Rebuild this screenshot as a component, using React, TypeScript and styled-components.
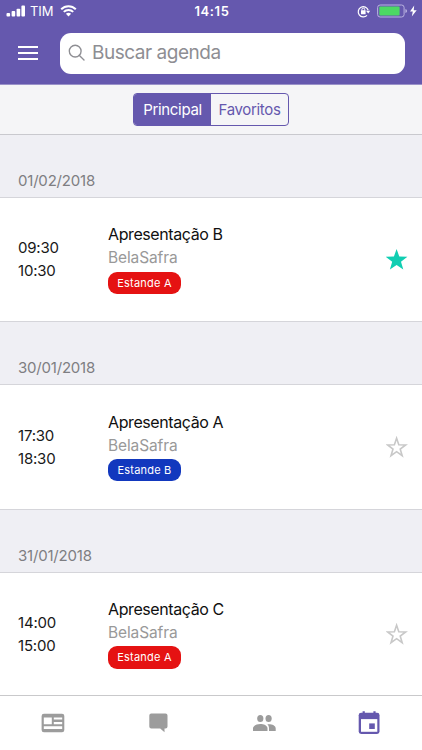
import React from "react";
import styled, { createGlobalStyle } from "styled-components";

const purple = "#6558ae";

const GlobalStyle = createGlobalStyle`
  * { box-sizing: border-box; }
  body { margin: 0; background: #fff; font-family: Inter, Roboto, "Liberation Sans", sans-serif; }
`;

const Screen = styled.div`
  width: 422px;
  height: 750px;
  display: flex;
  flex-direction: column;
  overflow: hidden;
  background: #efeff4;
`;

const Header = styled.header`
  height: 85px;
  flex: none;
  background: ${purple};
  border-bottom: 1px solid #9a92c9;
`;

const StatusBar = styled.div`
  height: 22px;
  display: grid;
  grid-template-columns: 1fr 40px 1fr;
  align-items: center;
  padding: 0 5px 0 6px;
  color: #fff;
`;

const StatusGroup = styled.div<{ $end?: boolean }>`
  display: flex;
  align-items: center;
  justify-content: ${(p) => (p.$end ? "flex-end" : "flex-start")};
`;

const Spacer = styled.span`
  width: 6px;
`;

const Carrier = styled.span`
  font-size: 13px;
  line-height: 22px;
  letter-spacing: -0.1px;
  margin: 0 7px 0 5px;
  width: 23px;
  white-space: nowrap;
`;

const Clock = styled.span`
  font-size: 13px;
  font-weight: 600;
  line-height: 22px;
  padding-left: 1px;
  text-align: center;
  white-space: nowrap;
  letter-spacing: 0.6px;
`;

const Toolbar = styled.div`
  display: flex;
  align-items: center;
  padding: 11px 17px 0 18px;
`;

const MenuButton = styled.button`
  border: 0;
  padding: 0;
  width: 20px;
  height: 14px;
  margin: -1px 22px 0 0;
  background: none;
  display: flex;
  flex-direction: column;
  justify-content: space-between;
`;

const MenuLine = styled.span`
  width: 20px;
  height: 2px;
  background: #fff;
`;

const SearchField = styled.div`
  flex: 1;
  height: 41px;
  border-radius: 11px;
  background: #fff;
  display: flex;
  align-items: center;
  padding: 0 8px 2px;
  color: #8e8e93;
`;

const SearchText = styled.span`
  margin-left: 6px;
  font-size: 19px;
  line-height: 24px;
  letter-spacing: -0.48px;
`;

const SegmentBar = styled.div`
  height: 50px;
  flex: none;
  display: flex;
  justify-content: center;
  align-items: flex-start;
  padding-top: 8px;
  background: #f5f5f7;
  border-bottom: 1px solid #c9c9ce;
`;

const Segment = styled.div`
  display: flex;
  width: 156px;
  height: 33px;
  border: 1px solid ${purple};
  border-radius: 4px;
  overflow: hidden;
`;

const SegmentButton = styled.button<{ $active?: boolean }>`
  width: 77px;
  border: 0;
  padding: 0;
  font: 400 15px/31px Inter, sans-serif;
  letter-spacing: -0.33px;
  background: ${(p) => (p.$active ? purple : "transparent")};
  color: ${(p) => (p.$active ? "#fff" : purple)};
`;

const Agenda = styled.main`
  height: 560px;
  flex: none;
`;

const DateHeading = styled.h2`
  margin: 0;
  height: 63.2px;
  padding: 35.2px 18px 0;
  border-bottom: 1px solid #d5d5da;
  font-size: 15px;
  font-weight: 400;
  line-height: 22px;
  letter-spacing: -0.2px;
  color: #7e7e82;
`;

const Entry = styled.article`
  height: 124.1px;
  display: grid;
  grid-template-columns: 90px 1fr 22px;
  padding: 0 14.5px 0 18px;
  background: #fff;
  border-bottom: 1px solid #d5d5da;
`;

const Times = styled.div`
  padding-top: 39.25px;
  font-size: 15px;
  line-height: 22.8px;
  letter-spacing: -0.2px;
  color: #181818;
`;

const Details = styled.div`
  display: flex;
  flex-direction: column;
  align-items: flex-start;
  padding-top: 24.2px;
`;

const Title = styled.h3`
  margin: 0;
  font-size: 16px;
  font-weight: 400;
  line-height: 24px;
  letter-spacing: -0.4px;
  color: #101010;
`;

const Company = styled.span`
  font-size: 15.5px;
  line-height: 24px;
  letter-spacing: -0.12px;
  color: #999;
`;

const Badge = styled.span<{ $color: string }>`
  margin-top: 1.2px;
  width: 73px;
  height: 22.5px;
  border-radius: 9px;
  background: ${(p) => p.$color};
  color: #fff;
  font-size: 11px;
  line-height: 23px;
  letter-spacing: 0.2px;
  text-align: center;
  white-space: nowrap;
`;

const StarSlot = styled.button`
  border: 0;
  padding: 50.5px 0 0;
  background: none;
  display: flex;
  align-items: flex-start;
`;

const TabBar = styled.nav`
  flex: 1;
  background: #fff;
  border-top: 1px solid #c9c9cb;
  display: grid;
  grid-template-columns: repeat(4, 1fr);
  align-items: center;
  justify-items: center;
`;

const Signal = () => (
  <svg width="19" height="12" viewBox="0 0 19 12" fill="#fff">
    <rect x="0.5" y="8" width="3.6" height="3.5" rx="0.9" />
    <rect x="5.6" y="6.1" width="3.6" height="5.4" rx="0.9" />
    <rect x="10.6" y="3.7" width="3.6" height="7.8" rx="0.9" />
    <rect x="15.4" y="0.6" width="3.6" height="10.9" rx="0.9" />
  </svg>
);

const Wifi = () => (
  <svg width="17" height="12" viewBox="0 0 17 12" fill="none" stroke="#fff" strokeWidth="2">
    <path d="M1.2 4.3C5.2.2 11.8.2 15.8 4.3M3.8 6.9C6.4 4.3 10.6 4.3 13.2 6.9" />
    <path d="M5.9 8.8Q8.5 6.6 11.1 8.8L8.5 11.5Z" fill="#fff" stroke="none" />
  </svg>
);

const RotationLock = () => (
  <svg width="14" height="13" viewBox="0 0 14 13" fill="none" stroke="#fff" strokeWidth="1.2">
    <path d="M10 10.4A5.1 5.1 0 1 1 11.2 5.3" />
    <path d="M9 5.8h4.2L11.2 8.6Z" fill="#fff" stroke="none" />
    <path d="M4.9 5.6V4.5a1.4 1.4 0 0 1 2.8 0v1.1" strokeWidth="1" />
    <rect x="4" y="5.3" width="4.6" height="3.9" rx=".5" fill="#fff" stroke="none" />
  </svg>
);

const Battery = () => (
  <svg width="40" height="14" viewBox="0 0 40 14">
    <rect x="0.6" y="1" width="26.5" height="12" rx="2.5" fill="none" stroke="#b9b2e0" />
    <rect x="2.3" y="2.6" width="20.3" height="8.8" rx="1" fill="#4cd964" />
    <path d="M28.4 5q1.7.3 1.7 2t-1.7 2Z" fill="#b9b2e0" />
    <path d="M37.2 1.6 33 7.6h2.8L34.8 12.6l4.9-6.3h-3Z" fill="#fff" />
  </svg>
);

const SearchIcon = () => (
  <svg width="18" height="18" viewBox="0 0 18 18" fill="none" stroke="#8e8e93" strokeWidth="1.35">
    <circle cx="7.2" cy="7.1" r="5.9" />
    <path d="m11.2 11.2 4.8 4.8" strokeLinecap="round" />
  </svg>
);

const Star = ({ filled }: { filled: boolean }) => (
  <svg width="22" height="22" viewBox="0 0 22 22">
    {filled ? (
      <path d="M10.6 0 13.3 7.6 21.4 7.8 15 12.7 17.3 20.5 10.6 15.9 3.9 20.5 6.2 12.7-.2 7.8 7.9 7.6Z" fill="#10ceb2" />
    ) : (
      <path d="M10.6 2.2 12.8 8.7 19.7 8.9 14.2 13 16.2 19.7 10.6 15.7 5 19.7 7 13 1.5 8.9 8.4 8.7Z" fill="none" stroke="#c8c8c8" strokeWidth="1.6" />
    )}
  </svg>
);

const NewsIcon = () => (
  <svg width="24" height="20" viewBox="0 0 24 20">
    <rect x=".6" y=".7" width="22.7" height="18.6" rx="2.3" fill="#9c9c9c" />
    <path d="M2.8 4.5h8v6.7h-8ZM12.8 4.5h8.4v2.1h-8.4ZM12.8 8.9h8.4v2.3h-8.4ZM2.8 13.3h18.4v2.8H2.8Z" fill="#fff" />
  </svg>
);

const ChatIcon = () => (
  <svg width="20" height="20" viewBox="0 0 20 20">
    <path d="M3.3 .6h14.2a2 2 0 0 1 2 2v11a2 2 0 0 1-2 2h-1v3.7L12.2 15.6H3.3a2 2 0 0 1-2-2V2.6a2 2 0 0 1 2-2Z" fill="#9c9c9c" />
  </svg>
);

const PeopleIcon = () => (
  <svg width="24" height="18" viewBox="0 0 24 18" fill="#9c9c9c">
    <ellipse cx="8.3" cy="4.5" rx="3.1" ry="3.5" />
    <ellipse cx="16.6" cy="4.5" rx="3.1" ry="3.5" />
    <path d="M1 17v-2.7c0-2.7 3.8-4.2 7.2-4.2s7.3 1.5 7.3 4.2V17ZM17 17v-2.7c0-1.7-.6-3-1.7-4 4-.5 8.4 1 8.4 4V17Z" />
  </svg>
);

const CalendarIcon = () => (
  <svg width="22" height="24" viewBox="0 0 22 24">
    <path d="M4.6.3h2.2v2.2H4.6ZM15.4.3h2.2v2.2h-2.2Z" fill={purple} />
    <rect x=".7" y="1.8" width="20.8" height="21.2" rx="2.4" fill={purple} />
    <path d="M3 8.1h16.3v12.7H3Z" fill="#fff" />
    <path d="M11.2 12.4h5.6V18h-5.6Z" fill={purple} />
  </svg>
);

const events = [
  { date: "01/02/2018", start: "09:30", end: "10:30", title: "Apresentação B", place: "Estande A", color: "#e51212", starred: true },
  { date: "30/01/2018", start: "17:30", end: "18:30", title: "Apresentação A", place: "Estande B", color: "#1238be", starred: false },
  { date: "31/01/2018", start: "14:00", end: "15:00", title: "Apresentação C", place: "Estande A", color: "#e51212", starred: false },
];

export default function App() {
  return (
    <>
      <GlobalStyle />
      <Screen>
        <Header>
          <StatusBar>
            <StatusGroup>
              <Signal />
              <Carrier>TIM</Carrier>
              <Wifi />
            </StatusGroup>
            <Clock>14:15</Clock>
            <StatusGroup $end>
              <RotationLock />
              <Spacer />
              <Battery />
            </StatusGroup>
          </StatusBar>
          <Toolbar>
            <MenuButton aria-label="Menu">
              <MenuLine />
              <MenuLine />
              <MenuLine />
            </MenuButton>
            <SearchField>
              <SearchIcon />
              <SearchText>Buscar agenda</SearchText>
            </SearchField>
          </Toolbar>
        </Header>
        <SegmentBar>
          <Segment>
            <SegmentButton $active>Principal</SegmentButton>
            <SegmentButton>Favoritos</SegmentButton>
          </Segment>
        </SegmentBar>
        <Agenda>
          {events.map((event) => (
            <section key={event.date}>
              <DateHeading>{event.date}</DateHeading>
              <Entry>
                <Times>
                  <div>{event.start}</div>
                  <div>{event.end}</div>
                </Times>
                <Details>
                  <Title>{event.title}</Title>
                  <Company>BelaSafra</Company>
                  <Badge $color={event.color}>{event.place}</Badge>
                </Details>
                <StarSlot aria-label="Favorito">
                  <Star filled={event.starred} />
                </StarSlot>
              </Entry>
            </section>
          ))}
        </Agenda>
        <TabBar>
          <NewsIcon />
          <ChatIcon />
          <PeopleIcon />
          <CalendarIcon />
        </TabBar>
      </Screen>
    </>
  );
}
